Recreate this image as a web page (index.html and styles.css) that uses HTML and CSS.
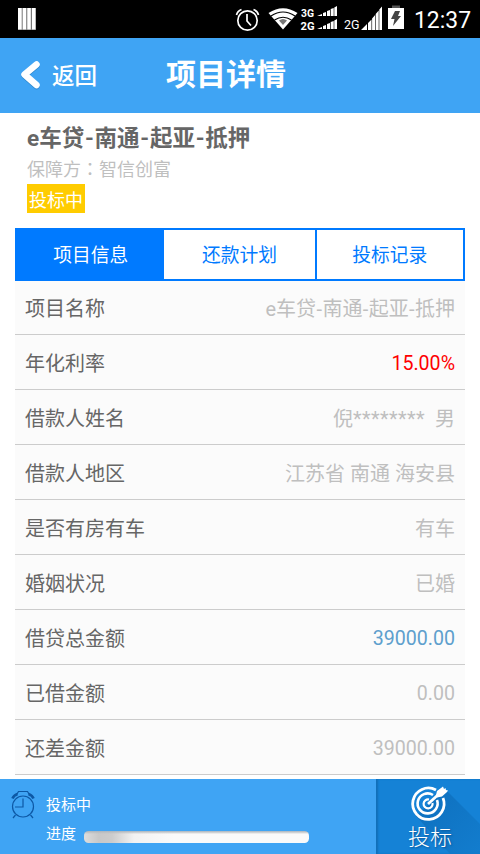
FILE: index.html
```html
<!DOCTYPE html>
<html lang="zh-CN">
<head>
<meta charset="utf-8">
<title>项目详情</title>
<link rel="stylesheet" href="styles.css">
</head>
<body>
<div class="status">
  <svg class="status-icons" viewBox="0 0 480 38" width="480" height="38">
    <path d="M18 8h18v22H18z" fill="#777"/>
    <g fill="#fff"><path d="M18 8h3.700v21.500H18zM22.700 8h3.500v21.500h-3.500zM27.300 8h3.500v21.500h-3.500zM32 8h3.500v21.500H32z"/></g>
    <g fill="none" stroke="#fff" stroke-width="1.700"><circle cx="247.500" cy="20.500" r="9.700"/><path d="M247 14v7l4 4.500M236.500 15q1-4 5-5.500M258.500 15q-1-4-5-5.500"/></g>
    <path d="M268.500 13Q283 3.500 297.500 13L283 29.500z" fill="#fff"/>
    <path d="M271 16Q283 8 295 16M274.500 20Q283 14.500 291.500 20" fill="none" stroke="#000" stroke-width="1.200"/>
    <path d="M279 20.500Q283 17.500 287 20.500L283 25z" fill="#777"/>
    <path d="M317 16l5-2v2zM323 13l3-1v4h-3zM327 11l3-1v6h-3zM330.700 9l3-1v8h-3zM334.300 7.500L337 6v10h-2.700zM317 29l5-2v2zM323 26l3-1v4h-3zM327 24l3-1v6h-3zM330.700 22l3-1v8h-3zM334.300 20.500L337 19v10h-2.700z" fill="#fff"/>
    <path d="M361 30l6-6v6zM368 23l3.500-3.500V30h-3.500zM372.100 18.500l3-3.500V30h-3zM375.700 14l3-3.500V30h-3zM379.300 9.500L382 6.500V30h-2.700z" fill="#fff"/>
    <path d="M388 8h16v21h-16z" fill="#fff"/><path d="M392 5.500h8V8h-8z" fill="#555"/>
    <path d="M395 11h5l-2 5h3l-8 10 1.500-7H391z" fill="#444"/>
    <g class="net"><text x="301" y="16.500" font-size="10.500" textLength="13" lengthAdjust="spacingAndGlyphs">3G</text><text x="300.500" y="29.500" font-size="10.500" textLength="14" lengthAdjust="spacingAndGlyphs">2G</text></g>
    <text class="net-thin" x="344" y="29" font-size="12" textLength="15.500" lengthAdjust="spacingAndGlyphs">2G</text>
    <text class="clock" x="414" y="28" font-size="24.500" textLength="57" lengthAdjust="spacingAndGlyphs">12:37</text>
  </svg>
</div>
<header class="header">
  <a class="back"><svg width="24" height="32" viewBox="0 0 24 32"><path class="back-shade" d="M18.500 5.500L6.500 15.500 18.500 26"/><path class="back-line" d="M18.500 4.500L6.500 14.500 18.500 25"/></svg><span>返回</span></a>
  <h1>项目详情</h1>
</header>
<main class="main">
  <section class="summary">
    <h2>e车贷<i>-</i>南通<i>-</i>起亚<i>-</i>抵押</h2>
    <p>保障方<span class="colon" lang="zh-TW">：</span>智信创富</p>
    <span class="badge">投标中</span>
  </section>
  <nav class="tabs"><a class="tab active">项目信息</a><a class="tab">还款计划</a><a class="tab">投标记录</a></nav>
  <div class="rows">
    <div class="row"><span>项目名称</span><b class="name">e车贷<i>-</i>南通<i>-</i>起亚<i>-</i>抵押</b></div>
    <div class="row"><span>年化利率</span><b class="num red">15.00%</b></div>
    <div class="row"><span>借款人姓名</span><b>倪<span class="stars">********</span>&nbsp; 男</b></div>
    <div class="row"><span>借款人地区</span><b>江苏省 南通 海安县</b></div>
    <div class="row"><span>是否有房有车</span><b>有车</b></div>
    <div class="row"><span>婚姻状况</span><b>已婚</b></div>
    <div class="row"><span>借贷总金额</span><b class="num blue">39000.00</b></div>
    <div class="row"><span>已借金额</span><b class="num">0.00</b></div>
    <div class="row"><span>还差金额</span><b class="num">39000.00</b></div>
  </div>
</main>
<footer class="footer">
  <svg class="alarm" width="26" height="30" viewBox="0 0 26 30"><g fill="none" stroke="#0d58a5" stroke-width="1.200"><circle cx="13" cy="16.500" r="10.500"/><path d="M13 8.500v8.500H5M5.500 25L3 28M20.500 25L23 28M7 4l1.500-2.500h9L19 4"/><path d="M2.500 8.500q1-3 5-4.500M23.500 8.500q-1-3-5-4.500" stroke-width="2.600"/></g></svg>
  <div class="progress">
    <div class="state">投标中</div>
    <div class="line"><span>进度</span><div class="bar"></div></div>
  </div>
  <a class="bid">
    <svg width="104" height="75" viewBox="0 0 104 75">
      <defs><linearGradient id="s" x1="0" y1="0" x2="1" y2="1"><stop offset="0" stop-color="#0b69b6"/><stop offset="1" stop-color="#127bcb"/></linearGradient></defs>
      <path d="M69 10l35 35v30H74L40 37z" fill="url(#s)" opacity=".75"/>
      <g fill="none" stroke="#fff"><path d="M60 11A15.700 15.700 0 1 0 67 19" stroke-width="2.800"/><path d="M57 16A10 10 0 1 0 61 21" stroke-width="2.600"/><path d="M53 20.500A4.500 4.500 0 1 0 56.500 24" stroke-width="2.200"/><path d="M52 25L64 14" stroke-width="2.800"/></g>
      <path d="M60 16l1-4 6-4.500 1 2.500 1.500-1 .5 2 2 .5-1 1.500-5 4.500-5 1z" fill="#fff"/>
    </svg>
    <span>投标</span>
  </a>
</footer>
</body>
</html>
```
FILE: styles.css
```css
* { box-sizing: border-box; }
body {
  margin: 0;
  width: 480px;
  height: 854px;
  overflow: hidden;
  display: flex;
  flex-direction: column;
  background: #fff;
  font-family: Roboto, "Noto Sans CJK SC", sans-serif;
}
h1, h2, p { margin: 0; }
i, b { font-style: normal; font-weight: 400; }
svg { display: block; flex: none; }
.status { height: 38px; background: #000; flex: none; }
.net { fill: #fff; font-weight: 700; }
.net-thin, .clock { fill: #fff; }
.header {
  height: 75px;
  flex: none;
  display: flex;
  align-items: center;
  background: #3fa4f4;
  color: #fff;
}
.back {
  width: 166px;
  padding-left: 18px;
  display: flex;
  align-items: center;
  gap: 10px;
  font-size: 22.5px;
  line-height: 30px;
  font-weight: 500;
}
.back span { margin-top: 1px; }
.back path { fill: none; stroke-width: 6.5; stroke-linecap: round; stroke-linejoin: round; }
.back .back-line { stroke: #fff; }
.back .back-shade { stroke: #318bd0; }
.header h1 { font-size: 30px; line-height: 44px; font-weight: 700; padding-bottom: 1px; }
.main { height: 666px; flex: none; overflow: hidden; padding: 0 15px; }
.summary { height: 115px; padding: 9px 12px 0; }
.summary h2 {
  font-size: 22.5px;
  line-height: 32px;
  font-weight: 700;
  color: #666;
  white-space: nowrap;
}
.summary h2 i { display: inline-block; width: 10.4px; text-align: center; font-weight: 700; }
.summary p { height: 30px; font-size: 18px; line-height: 31px; color: #bfbfbf; }
.colon { font-family: "Noto Sans CJK TC", sans-serif; line-height: 1; }
.badge {
  display: block;
  width: 58px;
  height: 29px;
  padding-left: 2px;
  background: #fc0;
  color: #fff;
  font-size: 18px;
  line-height: 33px;
}
.tabs { display: flex; height: 53px; border: 2px solid #007aff; }
.tab {
  width: 148px;
  color: #007aff;
  font-size: 18.75px;
  line-height: 53px;
  text-align: center;
}
.tab + .tab { width: 151px; }
.tab + .tab + .tab { width: 149px; border-left: 2px solid #007aff; }
.tab.active { background: #007aff; color: #fff; }
.rows { background: #fbfbfb; }
.row {
  height: 55px;
  padding: 0 10px;
  display: flex;
  justify-content: space-between;
  border-bottom: 1px solid #ccc;
  font-size: 20px;
  line-height: 58px;
  color: #666;
}
.row:first-child { height: 54px; line-height: 57px; }
.row b { color: #bfbfbf; white-space: pre; }
.row .name i { display: inline-block; width: 6.3px; text-align: center; }
.row .num { font-size: 19.6px; line-height: 57px; }
.stars { letter-spacing: .4px; }
.row .red { color: #f00; }
.row .blue { color: #5e9fcd; }
.footer {
  height: 75px;
  flex: none;
  display: flex;
  background: #3fa4f4;
  color: #fff;
}
.alarm { margin: 11px 10px 0; }
.progress { width: 330px; padding-top: 13px; font-size: 15px; }
.state { height: 26px; line-height: 26px; }
.line { display: flex; align-items: center; height: 32px; gap: 8px; }
.line span { margin-top: -3px; }
.bar {
  width: 225px;
  height: 12px;
  margin-top: 5px;
  border-radius: 4.5px;
  background: linear-gradient(180deg, #a9b4be 0, rgba(190, 190, 190, .5) 2px, transparent 3px), linear-gradient(90deg, #ddd 0, #c8c8c8 15px, #ccc 28px, #f2f2f2 50px, #fafafa 90px);
}
.bid {
  width: 104px;
  display: grid;
  background: #1582d6;
  box-shadow: inset 2px 0 2px #116fb9;
}
.bid svg, .bid span { grid-area: 1 / 1; }
.bid span {
  padding: 43px 0 0 32px;
  font-size: 22px;
  line-height: 32px;
  font-weight: 300;
  text-shadow: 1px 1px 2px #075293;
}
```
